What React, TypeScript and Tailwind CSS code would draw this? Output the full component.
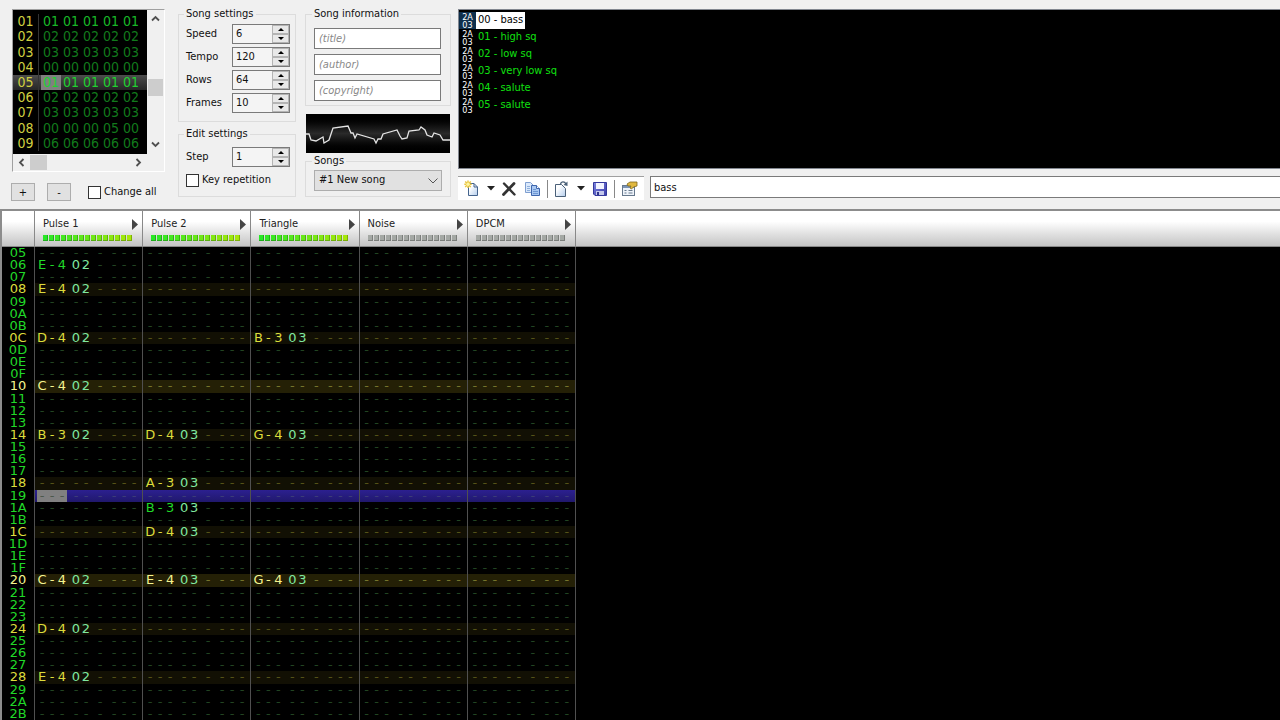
import React from "react";

const FRAMES: string[][] = [
  ["01", "01", "01", "01", "01", "01"],
  ["02", "02", "02", "02", "02", "02"],
  ["03", "03", "03", "03", "03", "03"],
  ["04", "00", "00", "00", "00", "00"],
  ["05", "01", "01", "01", "01", "01"],
  ["06", "02", "02", "02", "02", "02"],
  ["07", "03", "03", "03", "03", "03"],
  ["08", "00", "00", "00", "05", "00"],
  ["09", "06", "06", "06", "06", "06"],
];

const CHANNELS = [
  { name: "Pulse 1", active: true },
  { name: "Pulse 2", active: true },
  { name: "Triangle", active: true },
  { name: "Noise", active: false },
  { name: "DPCM", active: false },
];

const INSTRUMENTS = ["00 - bass", "01 - high sq", "02 - low sq", "03 - very low sq", "04 - salute", "05 - salute"];

// row -> channel -> [note, instrument]
const NOTES: Record<number, Record<number, [string, string]>> = {
  0x06: { 0: ["E-4", "02"] },
  0x08: { 0: ["E-4", "02"] },
  0x0c: { 0: ["D-4", "02"], 2: ["B-3", "03"] },
  0x10: { 0: ["C-4", "02"] },
  0x14: { 0: ["B-3", "02"], 1: ["D-4", "03"], 2: ["G-4", "03"] },
  0x18: { 1: ["A-3", "03"] },
  0x1a: { 1: ["B-3", "03"] },
  0x1c: { 1: ["D-4", "03"] },
  0x20: { 0: ["C-4", "02"], 1: ["E-4", "03"], 2: ["G-4", "03"] },
  0x24: { 0: ["D-4", "02"] },
  0x28: { 0: ["E-4", "02"] },
};

const FIRST_ROW = 0x05;
const LAST_ROW = 0x2b;
const CURRENT_ROW = 0x19;

function Group({ title, className, children }: { title: string; className: string; children: React.ReactNode }) {
  return (
    <fieldset className={`flex min-w-0 flex-col border border-[#dcdcdc] ${className}`}>
      <legend className="-ml-0.5 px-0.5 leading-[14px]">{title}</legend>
      {children}
    </fieldset>
  );
}

function Spinner({ label, value }: { label: string; value: string }) {
  const id = `spin-${label}`;
  return (
    <div className="flex items-center justify-between">
      <label htmlFor={id}>{label}</label>
      <div className="flex h-5 w-[58px] border border-[#7a7a7a] bg-[#f4f4f4]">
        <input id={id} defaultValue={value} className="w-[39px] bg-transparent pl-[3px] outline-none" />
        <div className="flex flex-1 flex-col bg-[#e8e8e8]">
          <button aria-label={`${label} up`} className="flex flex-1 items-center justify-center border border-[#b4b4b4]">
            <svg width="6" height="3" viewBox="0 0 6 3"><path d="M0 3L3 0L6 3Z" fill="#000" /></svg>
          </button>
          <button aria-label={`${label} down`} className="flex flex-1 items-center justify-center border border-[#b4b4b4]">
            <svg width="6" height="3" viewBox="0 0 6 3"><path d="M0 0L3 3L6 0Z" fill="#000" /></svg>
          </button>
        </div>
      </div>
    </div>
  );
}

function Check({ label, className = "" }: { label: string; className?: string }) {
  return (
    <label className={`flex items-center gap-[3px] leading-[14px] ${className}`}>
      <input type="checkbox" className="size-[13px] appearance-none border border-[#333] bg-white checked:bg-[#333]" />
      {label}
    </label>
  );
}

function Chevron({ d }: { d: string }) {
  return (
    <svg width="9" height="9" viewBox="0 0 9 9" fill="none" stroke="#505050" strokeWidth="1.8">
      <path d={d} />
    </svg>
  );
}

function FrameEditor() {
  return (
    <div className="border-t border-l border-t-[#a0a0a0] border-l-[#a0a0a0] border-r border-b border-r-white border-b-white">
      <div className="flex">
        <table className="flex h-36 w-[134px] flex-col bg-black pt-1 pb-[3px] font-['Liberation_Sans_Narrow','DejaVu_Sans_Condensed',sans-serif] text-[14px] leading-[15px]">
          <tbody className="flex min-h-0 flex-1 flex-col">
            {FRAMES.map((row) => {
              const current = row[0] === "05";
              return (
                <tr key={row[0]} className={`flex min-h-0 flex-1 items-center ${current ? "bg-linear-to-b from-[#4c4c4c] to-[#262626]" : ""}`}>
                  <th className="flex h-full w-[26px] items-center justify-center border-r border-[#333] font-normal text-[#d0d040]">{row[0]}</th>
                  {row.slice(1).map((v, i) => (
                    <td
                      key={i}
                      className={`flex h-full w-5 items-center justify-center first-of-type:ml-0.5 ${
                        current ? "text-[#20d030]" : row[0] === "01" ? "text-[#18b828]" : "text-[#127a1c]"
                      } ${current && i === 0 ? "bg-[#808080]" : ""}`}
                    >
                      {v}
                    </td>
                  ))}
                </tr>
              );
            })}
          </tbody>
        </table>
        <div className="flex w-[17px] flex-col items-center justify-between py-1">
          <Chevron d="M1 6.5L4.5 3L8 6.5" />
          <div className="mt-14 h-[17px] w-[15px] bg-[#cdcdcd]" />
          <div className="mt-auto mb-px"><Chevron d="M1 2.5L4.5 6L8 2.5" /></div>
        </div>
      </div>
      <div className="flex h-[17px] w-[134px] items-center pr-1 pl-1">
        <Chevron d="M6.5 1L3 4.5L6.5 8" />
        <div className="ml-1 h-[15px] w-[17px] bg-[#cdcdcd]" />
        <div className="ml-auto"><Chevron d="M2.5 1L6 4.5L2.5 8" /></div>
      </div>
    </div>
  );
}

function Waveform() {
  return (
    <div className="mx-px mt-2 mb-px h-[39px] bg-linear-to-b from-black via-[#2a2a2a] to-black">
      <svg className="h-full w-full" viewBox="0 0 144 39" preserveAspectRatio="none" fill="none" stroke="#e4e4e4" strokeWidth="1.3">
        <path d="M0 20H3L5 26L10 27L17 23L18 29L23 26L27 14L42 12L45 19H47L49 24L51 20L68 25L70 29L72 25H75L77 20L91 16L94 22L96 25L101 24L103 17L113 16L115 13L119 16L121 21L126 23L128 19L134 21L137 26H144" />
      </svg>
    </div>
  );
}

function Caret() {
  return <svg width="8" height="5" viewBox="0 0 8 5"><path d="M0 0H8L4 4.5Z" fill="#222" /></svg>;
}

function Tool({ label, className, children }: { label: string; className: string; children: React.ReactNode }) {
  return <button aria-label={label} className={`flex shrink-0 items-center justify-center ${className}`}>{children}</button>;
}

function Toolbar() {
  return (
    <div className="flex h-6 w-[186px] shrink-0 items-center border-t border-[#a0a0a0] bg-white pl-1.5">
      <svg width="0" height="0" aria-hidden="true">
        <defs>
          <linearGradient id="sheet" x1="0" y1="0" x2="1" y2="1">
            <stop offset=".3" stopColor="#fdfeff" />
            <stop offset="1" stopColor="#b4cdec" />
          </linearGradient>
          <linearGradient id="disk" x1="0" y1="0" x2="1" y2="1">
            <stop offset="0" stopColor="#7c84e0" />
            <stop offset="1" stopColor="#3a3ca8" />
          </linearGradient>
        </defs>
      </svg>
      <Tool label="New instrument" className="w-4">
        <svg width="16" height="18" viewBox="0 0 16 18">
          <path d="M4.5 3.5H10L13.5 7V15.500H4.5Z" fill="url(#sheet)" stroke="#44638c" />
          <path d="M10 3.500V7H13.500" fill="none" stroke="#44638c" />
          <path d="M4 .5V8M.3 4.200H7.700M1.200 1.500L6.800 7M6.800 1.500L1.200 7" stroke="#eac640" strokeWidth="1.5" />
          <circle cx="4" cy="4.200" r="1.700" fill="#fff6a0" />
        </svg>
      </Tool>
      <Tool label="New instrument menu" className="ml-[7px] w-2"><Caret /></Tool>
      <Tool label="Remove instrument" className="ml-1.5 w-4">
        <svg width="16" height="16" viewBox="0 0 16 16" stroke="#333" strokeLinecap="round"><path d="M3 2.500L13.500 13.500" strokeWidth="2.400" /><path d="M13 2.500L2.500 13.500" strokeWidth="2.800" /></svg>
      </Tool>
      <Tool label="Clone instrument" className="ml-[7px] w-[17px]">
        <svg width="17" height="16" viewBox="0 0 17 16">
          <path d="M1.500 1.500H6.500L9.500 4.500V11.500H1.500Z" fill="#dbe9fb" stroke="#7f9fd0" />
          <path d="M3 5.500H6M3 7.500H6M3 9.500H6" stroke="#8fb0dc" />
          <path d="M7.500 4.500H12.500L15.500 7.500V14.500H7.500Z" fill="#a9c8f2" stroke="#3f66ad" />
          <path d="M12.500 4.500V7.500H15.500" fill="#fff" stroke="#3f66ad" />
          <path d="M9 8.500H12M9 10.500H14M9 12.500H14" stroke="#6f98d4" />
        </svg>
      </Tool>
      <span className="ml-1.5 h-[18px] w-px bg-[#888]" />
      <Tool label="Load instrument" className="ml-1.5 w-4">
        <svg width="16" height="18" viewBox="0 0 16 18">
          <path d="M1.500 4.500H7.500L11.500 8.500V16.500H1.500Z" fill="url(#sheet)" stroke="#4a6078" />
          <path d="M6.500 4C7 1.500 10.500 1 12 4" stroke="#4a6078" strokeWidth="1.300" fill="none" />
          <path d="M13.500 1.500V6L9.500 5Z" fill="#4a6078" />
        </svg>
      </Tool>
      <Tool label="Load instrument menu" className="ml-[7px] w-2"><Caret /></Tool>
      <Tool label="Save instrument" className="ml-[7px] w-4">
        <svg width="16" height="16" viewBox="0 0 16 16">
          <path d="M1.500 1.500H14.500V14.500H3L1.500 13Z" fill="url(#disk)" stroke="#34389c" />
          <rect x="4" y="2" width="8" height="6" fill="#f2f4ff" />
          <rect x="4" y="10" width="8" height="4" fill="#c4c8ec" />
          <rect x="5" y="11" width="2" height="3" fill="#30368c" />
        </svg>
      </Tool>
      <span className="ml-1.5 h-[18px] w-px bg-[#888]" />
      <Tool label="Edit instrument" className="ml-1.5 w-[17px]">
        <svg width="17" height="16" viewBox="0 0 17 16">
          <rect x="1.500" y="4.500" width="12" height="10" fill="#eef3fa" stroke="#66788c" />
          <rect x="2" y="5" width="11" height="2" fill="#7c94b4" />
          <path d="M3.500 9.500H5.500M3.500 12H5.500M7.500 9.500H11.500M7.500 12H11.500" stroke="#66788c" />
          <path d="M6 3L9 1H16V5L12.500 6L10.500 8L9 7L10 5L7 5Z" fill="#e0b840" stroke="#80681c" strokeWidth=".8" />
        </svg>
      </Tool>
    </div>
  );
}

function InstrumentPanel() {
  return (
    <div className="flex min-w-0 flex-1 flex-col">
      <ul className="h-40 border border-r-0 border-[#828790] bg-black pt-0.5 text-[#10e010]">
        {INSTRUMENTS.map((name, i) => (
          <li key={name} className="flex h-[17px] items-center">
            <span className={`flex h-full w-[17px] flex-col items-center justify-center text-[9px] leading-[8px] text-white ${i === 0 ? "bg-[#10304c]" : ""}`}>
              <span>2A</span>
              <span>03</span>
            </span>
            <span className={`flex h-full items-center px-0.5 ${i === 0 ? "bg-white text-black" : ""}`}>{name}</span>
          </li>
        ))}
      </ul>
      <div className="mt-[7px] flex gap-1.5">
        <Toolbar />
        <input aria-label="Instrument name" defaultValue="bass" className="h-[22px] min-w-0 flex-1 border border-r-0 border-[#7a7a7a] bg-white pl-[3px] outline-none" />
      </div>
    </div>
  );
}

const LEDS = Array.from({ length: 15 }, (_, i) => i);

function ChannelHeader({ name, active }: { name: string; active: boolean }) {
  return (
    <th scope="col" className="flex min-w-0 flex-col border-l border-[#888] pt-[5px] pr-1 pl-2 text-left font-normal text-[#222]">
      <span className="flex h-4 items-center justify-between">
        {name}
        <svg width="6" height="11" viewBox="0 0 6 11"><path d="M0 0L6 5.500L0 11Z" fill="#444" /></svg>
      </span>
      <span className="mt-[3px] flex gap-px">
        {LEDS.map((i) => (
          <span
            key={i}
            className="h-[6px] w-[5px] border-r border-b border-black/25"
            style={{ backgroundColor: active ? `rgb(${40 + i * 9}, 232, ${38 - i * 2})` : "#a4a8a4" }}
          />
        ))}
      </span>
    </th>
  );
}

function Chars({ text, className }: { text: string; className: string }) {
  return (
    <span className={`flex ${className}`}>
      {text.split("").map((c, i) => (
        <span key={i} className="w-2.5 text-center">{c}</span>
      ))}
    </span>
  );
}

function PatternCell({ row, channel }: { row: number; channel: number }) {
  const entry = NOTES[row]?.[channel];
  const current = row === CURRENT_ROW;
  const dim = current ? "text-[#3c3c78]" : row % 16 === 0 ? "text-[#74742c]" : row % 4 === 0 ? "text-[#545218]" : "text-[#224422]";
  const lit = row % 16 === 0 ? "text-[#f4f490]" : row % 4 === 0 ? "text-[#dcdc3c]" : "text-[#20d828]";
  const selected = current && channel === 0;
  return (
    <td className="flex min-w-0 items-center gap-1 border-l border-[#505050] pl-0.5">
      <Chars
        text={entry ? entry[0] : "---"}
        className={selected ? "h-full items-center bg-[#808080] text-[#4c584c]" : entry ? lit : dim}
      />
      <Chars text={entry ? entry[1] : "--"} className={entry ? "text-[#80e8a0]" : dim} />
      <Chars text="-" className={dim} />
      <Chars text="---" className={dim} />
    </td>
  );
}

function PatternEditor() {
  const rows = Array.from({ length: LAST_ROW - FIRST_ROW + 1 }, (_, i) => FIRST_ROW + i);
  return (
    <table className="flex min-h-0 flex-1 flex-col border-t-2 border-l-2 border-[#8c8c8c] bg-black">
      <thead className="flex h-9 shrink-0 flex-col border-b border-[#888] bg-linear-to-b from-white from-30% to-[#c4c4c4]">
        <tr className="flex flex-1">
          <th className="w-8" aria-label="Row" />
          <td className="grid w-[542px] grid-cols-5 border-r border-[#888] p-0">
            {CHANNELS.map((c) => <ChannelHeader key={c.name} {...c} />)}
          </td>
        </tr>
      </thead>
      <tbody className="flex min-h-0 flex-1 flex-col font-['DejaVu_Sans',sans-serif] text-[13px] leading-[12px]">
        {rows.map((row) => {
          const beat = row % 4 === 0;
          const bar = row % 16 === 0;
          const bg = row === CURRENT_ROW ? "bg-linear-to-b from-[#2c2090] to-[#20186c]" : bar ? "bg-[#242006]" : beat ? "bg-[#121004]" : "";
          return (
            <tr key={row} className="flex min-h-0 flex-1">
              <th scope="row" className={`flex w-8 items-center justify-center font-normal ${bar ? "text-[#f4f490]" : beat ? "text-[#dcdc3c]" : "text-[#20d828]"}`}>
                {row.toString(16).toUpperCase().padStart(2, "0")}
              </th>
              <td className={`grid w-[542px] grid-cols-5 border-r border-[#505050] p-0 ${bg}`}>
                {CHANNELS.map((c, i) => <PatternCell key={c.name} row={row} channel={i} />)}
              </td>
            </tr>
          );
        })}
      </tbody>
    </table>
  );
}

export default function App() {
  return (
    <div className="flex h-screen flex-col overflow-hidden bg-[#f0f0f0] font-['DejaVu_Sans_Condensed','DejaVu_Sans',sans-serif] text-[11px] text-[#111]">
      <section className="flex shrink-0 pb-2 pl-3">
        <div className="flex w-[153px] shrink-0 flex-col pt-[9px]">
          <FrameEditor />
          <div className="mt-[11px] -ml-px flex items-center">
            <button className="h-[18px] w-6 border border-[#adadad] bg-[#e1e1e1] leading-none">+</button>
            <button className="ml-3 h-[18px] w-6 border border-[#adadad] bg-[#e1e1e1] leading-none">-</button>
            <Check label="Change all" className="ml-[17px] whitespace-nowrap" />
          </div>
        </div>
        <div className="ml-[13px] flex w-[118px] shrink-0 flex-col gap-[5px] pt-[7px]">
          <Group title="Song settings" className="gap-[3px] pt-[3px] pr-[5px] pb-2 pl-[7px]">
            <Spinner label="Speed" value="6" />
            <Spinner label="Tempo" value="120" />
            <Spinner label="Rows" value="64" />
            <Spinner label="Frames" value="10" />
          </Group>
          <Group title="Edit settings" className="gap-1.5 pt-1.5 pr-[5px] pb-[9px] pl-[7px]">
            <Spinner label="Step" value="1" />
            <Check label="Key repetition" className="whitespace-nowrap" />
          </Group>
        </div>
        <div className="ml-[9px] flex w-[146px] shrink-0 flex-col pt-[7px]">
          <Group title="Song information" className="gap-[5px] pt-[7px] pr-[9px] pb-1 pl-2">
            {["title", "author", "copyright"].map((f) => (
              <input key={f} aria-label={f} placeholder={`(${f})`} className="h-[21px] border border-[#7a7a7a] bg-white pl-1 outline-none placeholder:text-[#888] placeholder:italic" />
            ))}
          </Group>
          <Waveform />
          <Group title="Songs" className="pt-0.5 pr-2 pb-[5px] pl-2">
            <div className="relative">
              <select aria-label="Song" className="h-[21px] w-full appearance-none border border-[#adadad] bg-[#e1e1e1] pl-1">
                <option>#1 New song</option>
              </select>
              <svg className="pointer-events-none absolute top-2 right-1" width="10" height="6" viewBox="0 0 10 6" fill="none" stroke="#555"><path d="M.5 .5L5 5L9.500 .5" /></svg>
            </div>
          </Group>
        </div>
        <div className="ml-[7px] flex min-w-0 flex-1 pt-[9px]"><InstrumentPanel /></div>
      </section>
      <PatternEditor />
    </div>
  );
}
